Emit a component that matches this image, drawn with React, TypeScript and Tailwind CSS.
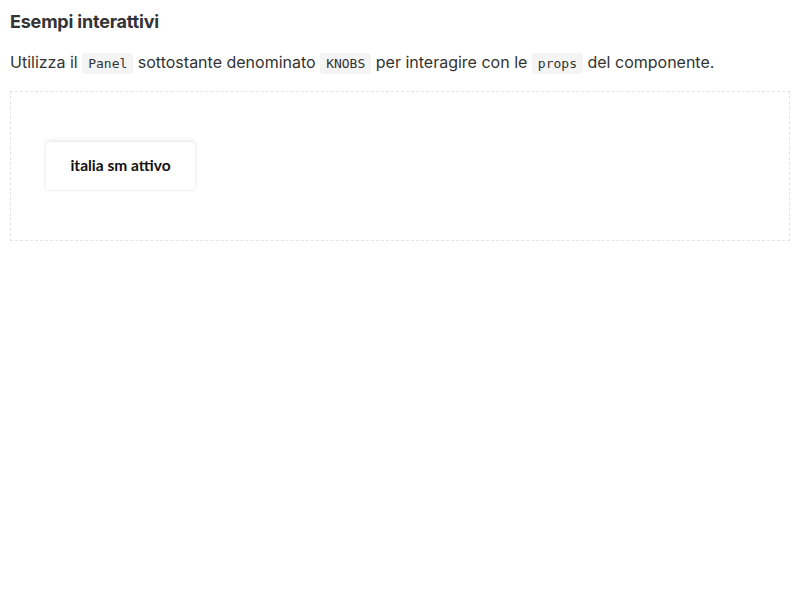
import React from "react";

const Code = ({ children }: { children: React.ReactNode }) => (
  <code className="rounded-[3px] bg-[#f4f4f4] px-[6px] py-[3px] font-['DejaVu_Sans_Mono',monospace] text-[13px] text-[#333]">
    {children}
  </code>
);

const App = () => {
  return (
    <div className="min-h-screen bg-white px-[10px] pt-[10px] font-['Inter',sans-serif] text-[#333]">
      {/* Title */}
      <h2 className="text-[18px] font-bold leading-[24px] tracking-[-0.2px] text-[#333]">
        Esempi interattivi
      </h2>

      {/* Description */}
      <p className="mt-[16px] text-[16px] font-normal leading-[24px] text-[#333]">
        Utilizza il <Code>Panel</Code> sottostante denominato <Code>KNOBS</Code>{" "}
        per interagire con le <Code>props</Code> del componente.
      </p>

      {/* Preview box */}
      <div className="mt-[15px] h-[150px] border border-dashed border-[#e4e4e4] px-[35px] pt-[50px]">
        <div className="flex h-[48px] w-[149px] items-center justify-center rounded-[4px] bg-white shadow-[0_-1px_4px_rgba(0,0,0,0.12),0_1px_1px_rgba(0,0,0,0.02)]">
          <span className="font-['Lato',sans-serif] text-[15.5px] font-bold text-[#111]">
            italia sm attivo
          </span>
        </div>
      </div>
    </div>
  );
};

export default App;
